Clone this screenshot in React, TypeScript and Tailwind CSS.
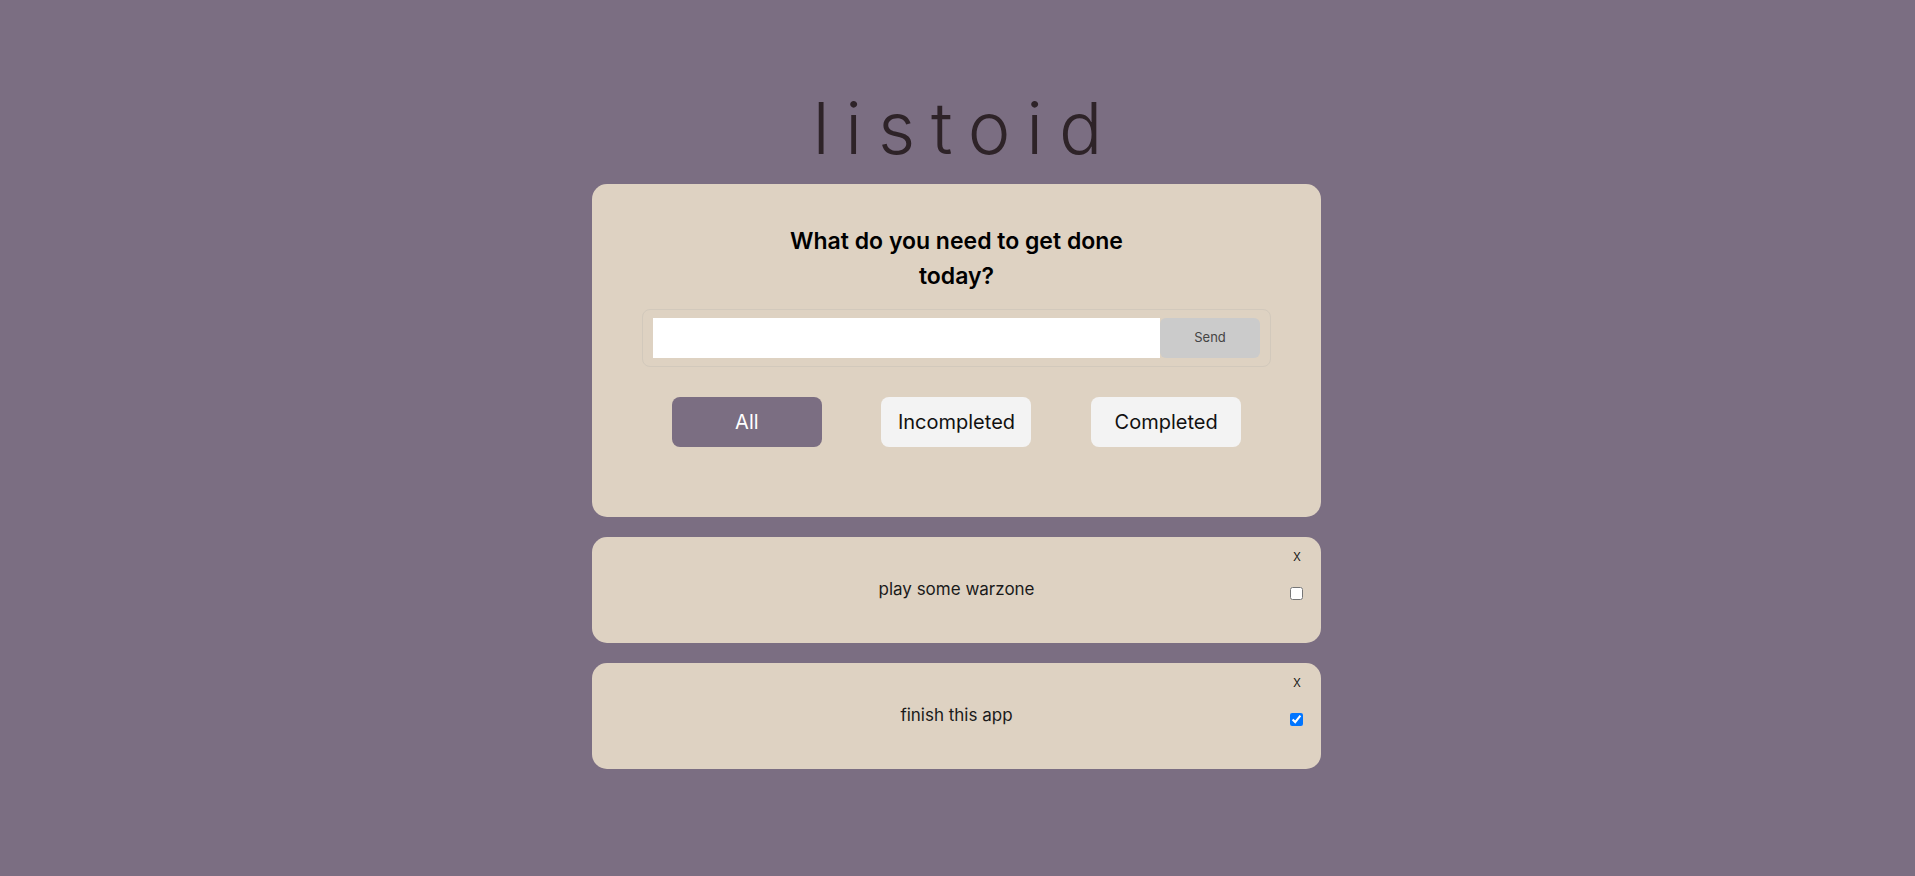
import React from "react";

function TodoItem({ text, done }: { text: string; done: boolean }) {
  return (
    <div className="relative h-[106px] rounded-[15px] bg-[#ded2c2] flex items-center justify-center">
      <span className="text-[17px] text-[#1a1a1a]">{text}</span>
      <button className="absolute top-[9px] right-[20px] text-[15px] font-light leading-[20px] text-[#111]">x</button>
      <input
        type="checkbox"
        defaultChecked={done}
        className="absolute top-[50px] right-[18px] w-[13px] h-[13px]"
      />
    </div>
  );
}

export default function App() {
  return (
    <div className="min-h-screen bg-[#7b6e82] flex flex-col items-center pt-[92px] font-['Inter','Noto_Sans',sans-serif]">
      <h1 className="text-[72px] leading-none font-light tracking-[0.22em] pl-[0.22em] text-[#2e2328]">listoid</h1>
      <div className="mt-[20px] w-[729px] -translate-x-[1px] flex flex-col gap-[20px]">
        <div className="bg-[#ded2c2] rounded-[15px] pt-[40px] pb-[70px] px-[50px] flex flex-col items-center">
          <h2 className="text-[23px] leading-[35px] font-semibold text-black text-center max-w-[380px]">
            What do you need to get done today?
          </h2>
          <div className="mt-[15px] w-full border border-[#d2c9bc] rounded-[8px] px-[10px] py-[8px] flex">
            <input type="text" className="flex-1 h-[40px] bg-white outline-none px-2" />
            <button className="w-[100px] h-[40px] bg-[#cbcbcb] rounded-[6px] text-[13px] text-[#444]">Send</button>
          </div>
          <div className="mt-[30px] w-full flex justify-around">
            <button className="w-[150px] h-[50px] rounded-[8px] bg-[#7b6e82] text-white text-[20px]">All</button>
            <button className="w-[150px] h-[50px] rounded-[8px] bg-[#f3f3f3] text-[#111] text-[20px]">Incompleted</button>
            <button className="w-[150px] h-[50px] rounded-[8px] bg-[#f3f3f3] text-[#111] text-[20px]">Completed</button>
          </div>
        </div>
        <TodoItem text="play some warzone" done={false} />
        <TodoItem text="finish this app" done={true} />
      </div>
    </div>
  );
}
